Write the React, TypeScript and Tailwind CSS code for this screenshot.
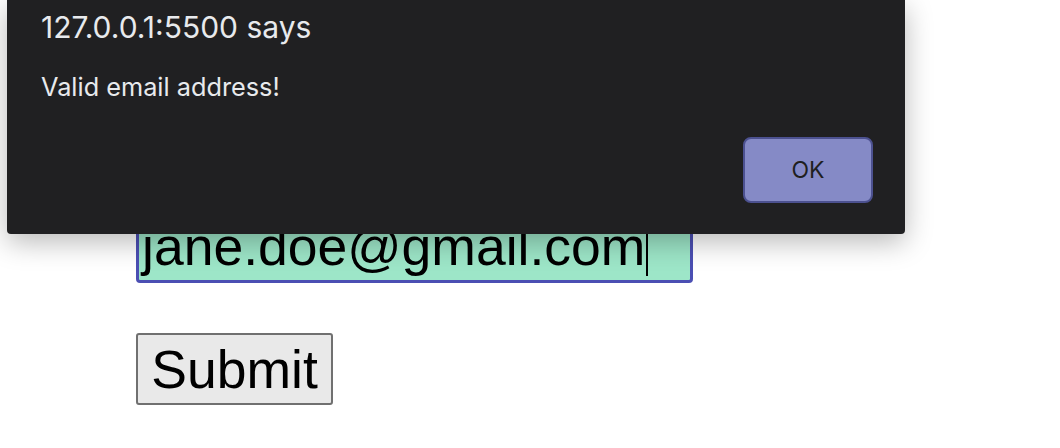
import React from "react";

function AlertDialog() {
  return (
    <div className="absolute left-[7px] top-0 flex h-[234px] w-[898px] flex-col rounded-b-[4px] bg-[#202022] px-[34px] pt-[9px] shadow-[0_8px_28px_rgba(0,0,0,0.28)] font-['Inter','Liberation_Sans',sans-serif]">
      <p className="text-[30px] leading-[36px] text-[#e8eaed]">127.0.0.1:5500 says</p>
      <p className="mt-[27px] text-[25.3px] leading-[30px] text-[#e8eaed]">Valid email address!</p>
      <div className="mt-[35px] flex justify-end">
        <button className="mr-[-2px] flex h-[66px] w-[130px] items-center justify-center rounded-[8px] border-2 border-[#4c5190] bg-[#858ac6] text-[23px] text-[#1f1f1f]">
          OK
        </button>
      </div>
    </div>
  );
}

export default function App() {
  return (
    <div className="relative h-[448px] w-[1060px] overflow-hidden bg-white font-['Liberation_Sans',Arial,sans-serif]">
      <form className="flex flex-col items-start gap-[50px] pl-[136px] pt-[210px]" onSubmit={(e) => e.preventDefault()}>
        <div className="h-[73px] w-[557px] rounded-[4px] border-[3px] border-[#4b4fb3] bg-[#9de6c8] px-[3px] pt-[3px]">
          <div className="flex items-center text-[53.5px] leading-[61px] text-black">
            <span>jane.doe@gmail.com</span>
            <span className="ml-[1px] mt-[4px] h-[55px] w-[2px] bg-black" />
          </div>
        </div>
        <button
          type="submit"
          className="flex h-[72px] w-[197px] items-center justify-center rounded-[3px] border-2 border-[#707070] bg-[#e9e9e9] text-[53.5px] leading-[61px] text-black"
        >
          Submit
        </button>
      </form>
      <AlertDialog />
    </div>
  );
}
